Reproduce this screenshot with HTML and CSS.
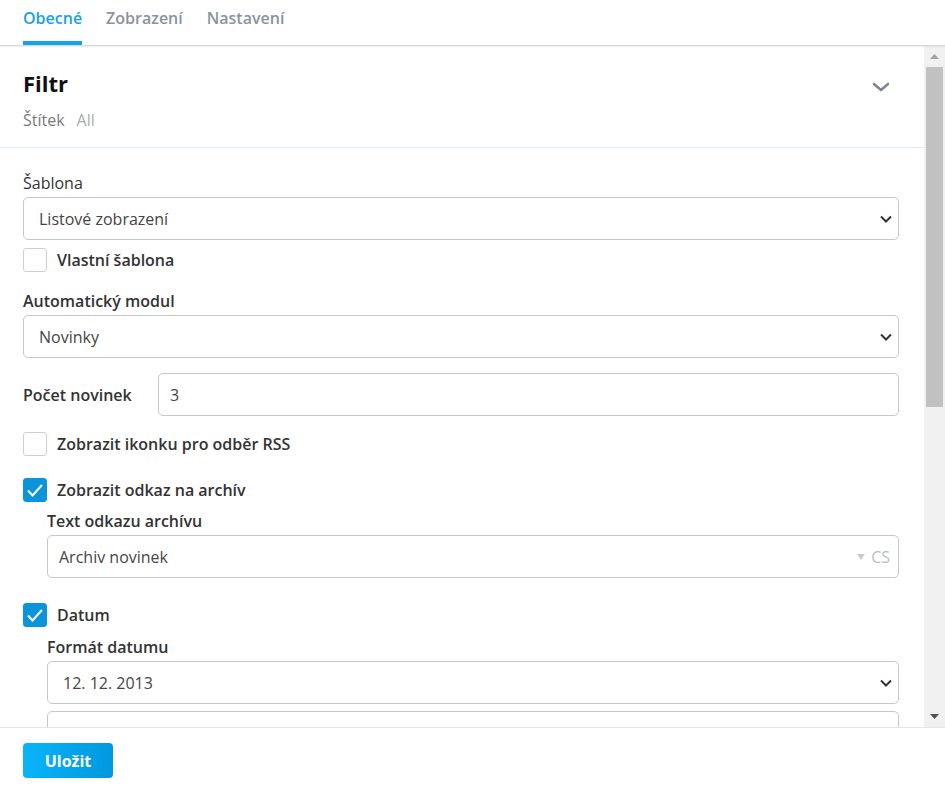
FILE: index.html
```html
<!DOCTYPE html>
<html lang="cs">
<head>
<meta charset="utf-8">
<title>Filtr</title>
<link rel="stylesheet" href="styles.css">
</head>
<body>
<nav class="tabs">
  <a class="tab active">Obecné</a>
  <a class="tab">Zobrazení</a>
  <a class="tab">Nastavení</a>
</nav>
<div class="main">
  <div class="content">
    <header class="head">
      <div class="head-text">
        <h1 class="title">Filtr</h1>
        <div class="meta"><span class="meta-key">Štítek</span><span class="meta-val">All</span></div>
      </div>
      <svg class="collapse" width="18" height="10" viewBox="0 0 18 10"><path d="M2 2 L9 8 L16 2" fill="none" stroke="#7d8792" stroke-width="2.6" stroke-linecap="round" stroke-linejoin="round"/></svg>
    </header>
    <form class="form">
      <label class="lbl lbl-regular">Šablona</label>
      <div class="control select"><span>Listové zobrazení</span><svg width="12" height="8" viewBox="0 0 12 8"><path d="M1 1.5 L6 6.5 L11 1.5" fill="none" stroke="#333" stroke-width="2"/></svg></div>
      <div class="check-row r-custom"><span class="cb"></span><span class="cb-text">Vlastní šablona</span></div>

      <label class="lbl l-module">Automatický modul</label>
      <div class="control select"><span>Novinky</span><svg width="12" height="8" viewBox="0 0 12 8"><path d="M1 1.5 L6 6.5 L11 1.5" fill="none" stroke="#333" stroke-width="2"/></svg></div>

      <div class="inline-row">
        <label class="lbl inline-lbl">Počet novinek</label>
        <div class="control input grow"><span>3</span></div>
      </div>

      <div class="check-row r-rss"><span class="cb"></span><span class="cb-text">Zobrazit ikonku pro odběr RSS</span></div>
      <div class="check-row r-archive"><span class="cb checked"><svg width="24" height="24" viewBox="0 0 24 24"><path d="M5 12.5 L9.5 17.5 L19 7" fill="none" stroke="#fff" stroke-width="2"/></svg></span><span class="cb-text">Zobrazit odkaz na archív</span></div>
      <div class="sub">
        <label class="lbl">Text odkazu archívu</label>
        <div class="control input"><span>Archiv novinek</span><span class="lang"><svg width="8" height="6" viewBox="0 0 8 6"><path d="M0 0 H8 L4 6 Z" fill="#c6ccd1"/></svg>CS</span></div>
      </div>

      <div class="check-row r-date"><span class="cb checked"><svg width="24" height="24" viewBox="0 0 24 24"><path d="M5 12.5 L9.5 17.5 L19 7" fill="none" stroke="#fff" stroke-width="2"/></svg></span><span class="cb-text">Datum</span></div>
      <div class="sub">
        <label class="lbl">Formát datumu</label>
        <div class="control select"><span>12. 12. 2013</span><svg width="12" height="8" viewBox="0 0 12 8"><path d="M1 1.5 L6 6.5 L11 1.5" fill="none" stroke="#333" stroke-width="2"/></svg></div>
        <div class="control input next"><span>Vlastní formát</span></div>
      </div>
    </form>
  </div>
  <div class="scrollbar">
    <div class="sb-btn"><svg width="9" height="5" viewBox="0 0 9 5"><path d="M0 5 L4.5 0 L9 5 Z" fill="#a3a3a3"/></svg></div>
    <div class="sb-thumb"></div>
    <div class="sb-track"></div>
    <div class="sb-btn"><svg width="9" height="5" viewBox="0 0 9 5"><path d="M0 0 L9 0 L4.5 5 Z" fill="#505050"/></svg></div>
  </div>
</div>
<footer class="footer">
  <button class="save" type="button">Uložit</button>
</footer>
</body>
</html>
```

FILE: styles.css
```css
html, body {
  margin: 0;
  padding: 0;
  height: 100%;
}
body {
  font-family: "Open Sans", "Noto Sans", "Liberation Sans", sans-serif;
  font-size: 16px;
  color: #333;
  background: #fff;
  display: flex;
  flex-direction: column;
  overflow: hidden;
}

/* Tabs */
.tabs {
  flex: none;
  height: 46px;
  box-sizing: border-box;
  border-bottom: 1px solid #d4d6d8;
  box-shadow: 0 1px 2px rgba(0, 0, 0, 0.07);
  display: flex;
  gap: 24px;
  padding: 0 23px;
  position: relative;
  z-index: 1;
}
.tab {
  height: 45px;
  box-sizing: border-box;
  padding-top: 7px;
  font-size: 16px;
  line-height: 22px;
  font-weight: 600;
  color: #8b939c;
  border-bottom: 4px solid transparent;
  cursor: pointer;
}
.tab.active {
  color: #17a2e4;
  border-bottom-color: #17a2e4;
}

/* Main */
.main {
  flex: 1;
  min-height: 0;
  display: flex;
}
.content {
  flex: 1;
  min-width: 0;
  overflow: hidden;
}

.head {
  display: flex;
  justify-content: space-between;
  align-items: flex-start;
  padding: 22px 34px 16px 23px;
  border-bottom: 1px solid #e1ebf2;
}
.title {
  margin: 0;
  font-size: 22px;
  line-height: 30px;
  font-weight: 700;
  color: #111;
}
.meta {
  margin-top: 11px;
  line-height: 22px;
  display: flex;
  gap: 12px;
}
.meta-key { color: #7a7a7a; }
.meta-val { color: #aaaaaa; }
.collapse {
  margin-top: 14px;
}

/* Form */
.form {
  padding: 24px 25px 0 23px;
}
.lbl {
  display: block;
  font-weight: 600;
  line-height: 22px;
  color: #333;
  margin-bottom: 3px;
}
.lbl-regular { font-weight: 400; }
.l-module { margin-top: 18px; }

.control {
  height: 43px;
  box-sizing: border-box;
  border: 1px solid #c3c8cd;
  border-radius: 5px;
  background: #fff;
  display: flex;
  align-items: center;
  justify-content: space-between;
  color: #454545;
  line-height: 22px;
}
.select {
  padding: 0 6px 0 15px;
}
.input {
  padding: 0 8px 0 11px;
}
.grow { flex: 1; }

.check-row {
  display: flex;
  align-items: center;
  gap: 10px;
  height: 24px;
}
.r-custom { margin-top: 8px; }
.r-rss { margin-top: 16px; }
.r-archive { margin-top: 22px; }
.r-date { margin-top: 25px; }

.cb {
  width: 24px;
  height: 24px;
  box-sizing: border-box;
  border: 1px solid #ccd0d4;
  border-radius: 3px;
  background: #fff;
  flex: none;
  display: flex;
}
.cb svg { margin: -1px; }
.cb.checked {
  background: #0b94da;
  border-color: #0b94da;
}
.cb-text {
  font-weight: 600;
  line-height: 22px;
  color: #333;
}

.inline-row {
  margin-top: 15px;
  display: flex;
  align-items: center;
}
.inline-lbl {
  width: 135px;
  flex: none;
  margin: 0;
}

.sub {
  margin-left: 24px;
}
.sub > .lbl:first-child { margin-top: 8px; }
.r-date + .sub > .lbl:first-child { margin-top: 9px; }

.lang {
  display: flex;
  align-items: center;
  gap: 6px;
  color: #b9bfc5;
}
.next { margin-top: 7px; }

/* Scrollbar */
.scrollbar {
  flex: none;
  width: 21px;
  background: #f1f1f1;
  display: flex;
  flex-direction: column;
  align-items: center;
}
.sb-btn {
  height: 21px;
  width: 21px;
  display: flex;
  align-items: center;
  justify-content: center;
  flex: none;
}
.sb-thumb {
  width: 17px;
  height: 340px;
  background: #c1c1c1;
  flex: none;
}
.sb-track { flex: 1; }

/* Footer */
.footer {
  flex: none;
  height: 62px;
  box-sizing: border-box;
  border-top: 1px solid #e4e4e4;
  padding: 15px 23px;
}
.save {
  width: 90px;
  height: 35px;
  border: 0;
  border-radius: 4px;
  background: linear-gradient(90deg, #0ab4f8, #0098e0);
  color: #fff;
  font-family: "Open Sans", "Noto Sans", sans-serif;
  font-size: 16px;
  line-height: 22px;
  font-weight: 700;
  padding: 0;
  display: flex;
  align-items: center;
  justify-content: center;
  cursor: pointer;
}
```
